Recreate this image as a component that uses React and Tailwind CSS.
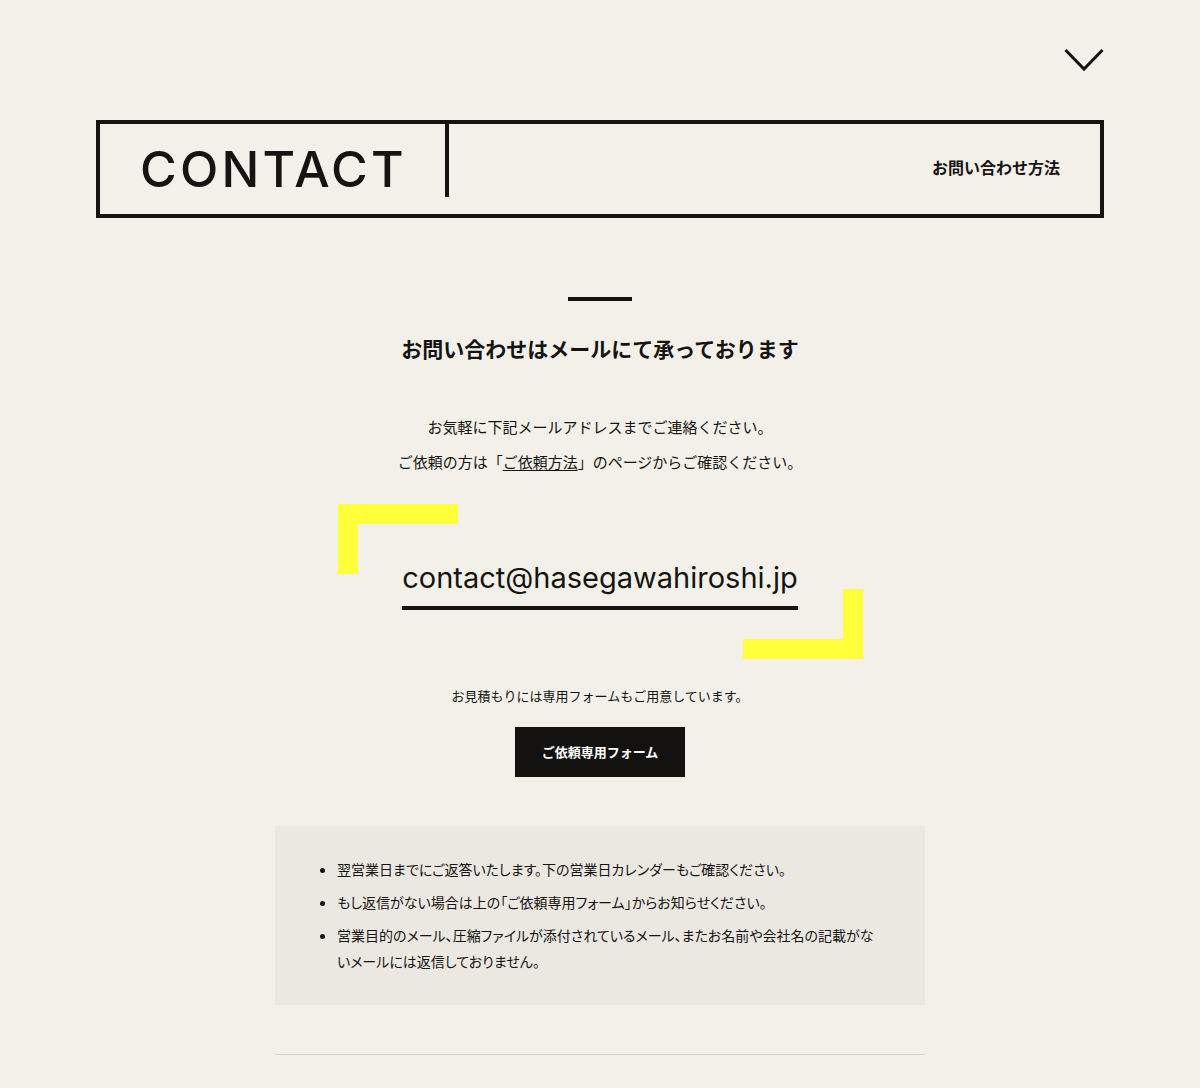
import React from 'react';

const jp = "font-['Noto_Sans_CJK_JP','Noto_Sans',sans-serif]";

function Chevron() {
  return (
    <svg width="40" height="24" viewBox="0 0 40 24" fill="none">
      <polyline points="1.5,2 20,21 38.5,2" stroke="#161412" strokeWidth="3" />
    </svg>
  );
}

function Bracket({ className }) {
  return <div className={`absolute bg-[#ffff3a] ${className}`} />;
}

export default function App() {
  return (
    <div className={`min-h-[1088px] bg-[#f2f0e9] text-[#161412] ${jp}`}>
      <div className="px-[96px] pt-[48px]">
        <div className="flex justify-end">
          <Chevron />
        </div>

        <div className="mt-[48px] flex h-[98px] items-center border-4 border-[#161412]">
          <h1 className="pl-[40px] pr-[38px] font-['Inter',sans-serif] text-[50px] font-medium leading-none tracking-[0.065em]">
            CONTACT
          </h1>
          <div className="h-[73px] w-[4px] self-start bg-[#161412]" />
          <a className="mb-[4px] ml-auto pr-[40px] text-[16px] font-bold">お問い合わせ方法</a>
        </div>
      </div>

      <main className="flex flex-col items-center">
        <div className="mt-[79px] h-[4px] w-[64px] bg-[#161412]" />
        <h2 className="mt-[32px] text-[21px] font-bold leading-[30px]">
          お問い合わせはメールにて承っております
        </h2>

        <div className="mt-[46px] text-center text-[15px] leading-[35px]">
          <p>お気軽に下記メールアドレスまでご連絡ください。</p>
          <p>
            ご依頼の方は「<a className="underline underline-offset-2">ご依頼方法</a>」のページからご確認ください。
          </p>
        </div>

        <div className="relative mt-[25px] flex w-[525px] justify-center pt-[56px] pb-[49px]">
          <Bracket className="left-0 top-0 h-[20px] w-[120px]" />
          <Bracket className="left-0 top-0 h-[70px] w-[20px]" />
          <Bracket className="right-0 bottom-0 h-[20px] w-[120px]" />
          <Bracket className="right-0 bottom-0 h-[70px] w-[20px]" />
          <a className="relative border-b-4 border-[#161412] pb-[10px] font-['Inter',sans-serif] text-[29px] leading-[36px]">
            contact@hasegawahiroshi.jp
          </a>
        </div>

        <p className="mt-[24px] text-[13px] leading-[26px]">お見積もりには専用フォームもご用意しています。</p>
        <a className="mt-[18px] flex h-[50px] w-[170px] items-center justify-center bg-[#131211] text-[13px] font-bold text-white">
          ご依頼専用フォーム
        </a>

        <div className="mt-[49px] w-[650px] bg-[#ebe8e2] pt-[30px] pb-[31px] pl-[62px] pr-[40px]">
          <ul className="list-disc space-y-[7px] text-[14px] leading-[26px] [font-feature-settings:'palt']">
            <li>翌営業日までにご返答いたします。下の営業日カレンダーもご確認ください。</li>
            <li>もし返信がない場合は上の「ご依頼専用フォーム」からお知らせください。</li>
            <li>営業目的のメール、圧縮ファイルが添付されているメール、またお名前や会社名の記載がないメールには返信しておりません。</li>
          </ul>
        </div>

        <div className="mt-[49px] h-px w-[650px] bg-[#d6d3cc]" />
      </main>
    </div>
  );
}
